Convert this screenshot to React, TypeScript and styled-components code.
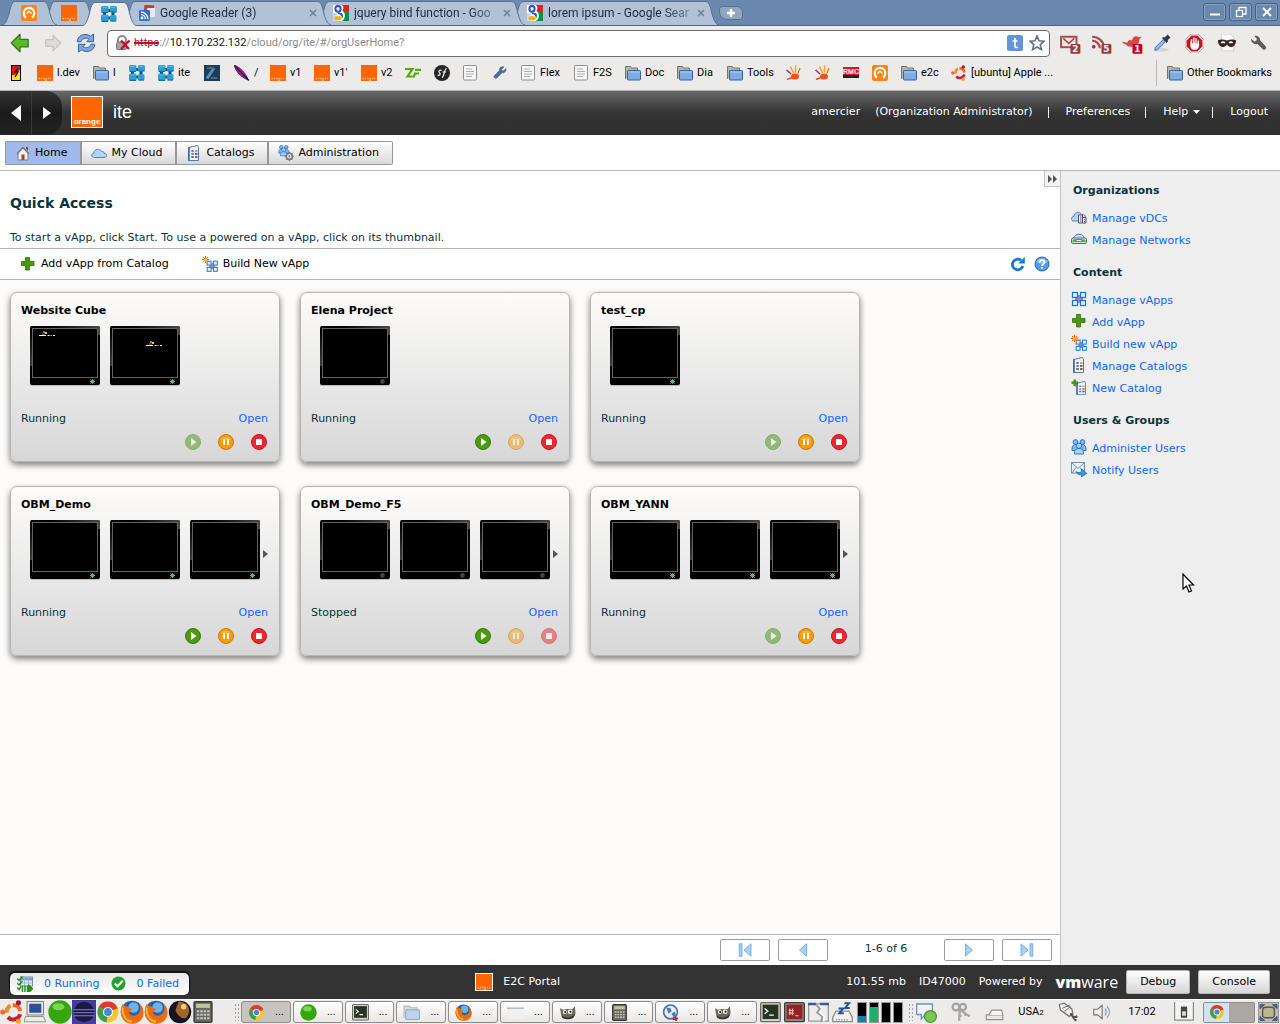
import React from 'react';
import styled, { createGlobalStyle, css } from 'styled-components';

const appFont = '"DejaVu Sans", Verdana, sans-serif';
const chromeFont = 'Roboto, "Open Sans", sans-serif';

const GlobalStyle = createGlobalStyle`
  * { box-sizing: border-box; }
  body { margin: 0; background: #fff; font: 11px/16px ${appFont}; color: #0b333c; }
  button, input { font: inherit; color: inherit; margin: 0; }
  a { color: #0a68ff; text-decoration: none; }
  h1, h2, h3 { margin: 0; font-weight: bold; }
  svg { display: block; flex: none; }
`;

/* ---------- icons ---------- */

type IconProps = { size?: number; dim?: boolean };

const Glyph = styled.svg.attrs({ viewBox: '0 0 16 16', 'aria-hidden': true })<{ $size: number; $dim?: boolean }>`
  width: ${p => p.$size}px;
  height: ${p => p.$size}px;
  opacity: ${p => (p.$dim ? 0.5 : 1)};
`;

const icon = (body: React.ReactNode) =>
  function Icon({ size = 16, dim }: IconProps) {
    return <Glyph $size={size} $dim={dim}>{body}</Glyph>;
  };

const SwirlIcon = icon(<>
  <rect width="16" height="16" rx="2" fill="#ff8412" />
  <path d="M5 12.500a5.300 5.300 0 1 1 6 0" fill="none" stroke="#fff" strokeWidth="2.200" />
  <path d="M5.500 8.500L8 6l2.500 2.500" fill="none" stroke="#fff" strokeWidth="1.200" />
</>);
const OrangeIcon = icon(<>
  <rect width="16" height="16" fill="#ff6600" />
  <path d="M1.500 13.500h1.600m.8 0h1.400m.8 0h1.600m.8 0h1.400m.8 0h1.400m.8 0h1.200M8 15.200h2" stroke="#ffb27f" strokeWidth="1.600" />
</>);
const BlocksIcon = icon(<>
  <path d="M6 4.500h5M3.500 6v4M6 12h4M12 5v5" stroke="#184f70" strokeWidth="3" />
  <g fill="#2a9fd6">
    <rect x="0" y="0" width="7.500" height="7" rx="1.500" /><rect x="9" y="0" width="7" height="6.500" rx="1.500" />
    <rect x="0" y="8.500" width="7.500" height="7.500" rx="1.500" /><rect x="9" y="9" width="6.500" height="6.500" rx="1.500" />
  </g>
  <path d="M1 6.500h6M9.500 6h6M1 15.300h6M9.500 15h5.500" stroke="#156c9c" strokeWidth="1.200" />
  <path d="M1.500 1.500h4.500M10.300 1.500h4M1.500 10h4.500" stroke="#58bbe8" strokeWidth="1" />
</>);
const ReaderIcon = icon(<>
  <rect x="5" y="0" width="10" height="10" rx="1" fill="#c8402f" transform="rotate(4 9 5)" />
  <rect x="8" y="3" width="8" height="9" rx="1" fill="#e8ebf4" />
  <rect x="0" y="5" width="11" height="11" rx="1.400" fill="#2d6fd4" />
  <circle cx="3" cy="13" r="1.400" fill="#fff" />
  <path d="M2 9.600a4.600 4.600 0 0 1 4.400 4.600M2 7a7.200 7.200 0 0 1 7 7.200" fill="none" stroke="#fff" strokeWidth="1.400" />
</>);
const GoogleIcon = icon(<>
  <rect width="16" height="16" fill="#fff" />
  <path d="M9 0h7v6H9z" fill="#e8201c" /><path d="M8 6h8v10H9z" fill="#0d9044" />
  <path d="M0 8h4l-1 8H0z" fill="#c9d8f5" />
  <path d="M9 1c1 2 0 4-1 5.500 3 1 3 3 3 4.500 0 2-1 3-2 4" fill="none" stroke="#fff" strokeWidth="2" />
  <ellipse cx="5" cy="3.800" rx="2.600" ry="2.900" fill="#fff" stroke="#2457c5" strokeWidth="2" />
  <path d="M5 8.200c3 .4 4 1.300 3.800 3" fill="none" stroke="#2457c5" strokeWidth="1.800" />
  <ellipse cx="5" cy="13.200" rx="3.600" ry="2.200" fill="#f7b50c" />
</>);
const BackIcon = icon(<path d="M1 8l7-7v4h6.500v6H8v4z" fill="#5db82c" stroke="#2c7a12" strokeWidth="1" strokeLinejoin="round" />);
const ForwardIcon = icon(<path d="M15 8L8 1v4H1.500v6H8v4z" fill="#dcdcda" stroke="#c2c2c0" strokeWidth="1" strokeLinejoin="round" />);
const ReloadIcon = icon(<g fill="#7fa9de" stroke="#3162a0" strokeWidth=".8" strokeLinejoin="round">
  <path d="M1 7C1 2 7-.5 11.500 2.500L14 .8V7H8.500l2-2C7.500 3.300 5 4.500 4 7z" />
  <path d="M15 9c0 5-6 7.500-10.500 4.500L2 15.200V9h5.500l-2 2c3 1.700 5.500.5 6.500-2z" />
</g>);
const LockIcon = icon(<>
  <path d="M3 8V5a4 4 0 0 1 8 0v3" fill="none" stroke="#8c8c8c" strokeWidth="2" />
  <rect x="1.500" y="7" width="10" height="7.500" rx="1.500" fill="#a5a5a3" stroke="#777" />
  <path d="M6 5.500l8 8.500M14.500 5.500L6 14" stroke="#c9102a" strokeWidth="2.400" />
</>);
const TumblrIcon = icon(<>
  <rect width="16" height="16" rx="2" fill="#6594dd" />
  <path d="M8 3v8c0 1.500 1.300 1.800 2.800 1.200M5.500 6h5" fill="none" stroke="#fff" strokeWidth="1.700" />
</>);
const StarIcon = icon(<path d="M8 1l2 4.800 5 .4-3.800 3.400 1.200 5L8 12l-4.400 2.600 1.200-5L1 6.200l5-.4z" fill="#fff" stroke="#5f6f8d" strokeWidth="1.600" />);
const badge = (n: string, c: string) => <>
  <rect x="9.500" y="8" width="9" height="9" rx="1" fill={c} />
  <text x="14" y="15.500" fontSize="8" fontWeight="bold" fill="#fff" textAnchor="middle" fontFamily="DejaVu Sans">{n}</text>
</>;
const BigGlyph = styled.svg.attrs({ viewBox: '0 0 20 18', 'aria-hidden': true })`width: 22px; height: 20px; margin-top: 4px;`;
const MailBadge = () => <BigGlyph><rect x="1" y="1.500" width="14" height="9.500" fill="#f4e9e9" stroke="#a94a4c" strokeWidth="1.800" /><path d="M3 3l5 4.500L13 3" fill="none" stroke="#a94a4c" strokeWidth="1.600" />{badge('2', '#9b3b3f')}</BigGlyph>;
const FeedBadge = () => <BigGlyph><circle cx="2.500" cy="10.500" r="1.700" fill="#9c3a3a" /><path d="M1 5a7 7 0 0 1 7 7M1 1.500A11 11 0 0 1 12 11" fill="none" stroke="#a94a4c" strokeWidth="2" />{badge('5', '#9b3b3f')}</BigGlyph>;
const BirdBadge = () => <BigGlyph><path d="M0 6l5 1C5 4 8 4 9 5c1-4 4-5 6-3l3-.5-2 2c0 5-4 7-8 7-3 0-4-1-4-2C2 8.500 1 7.500 0 6z" fill="#d5464a" />{badge('1', '#c4001d')}</BigGlyph>;
const DropperIcon = icon(<><ellipse cx="8" cy="14" rx="6" ry="1.500" fill="#d3d3d0" /><path d="M1.500 14.500L2 12l7-7 2 2-7 7z" fill="#8fb9ee" stroke="#3a6cae" strokeWidth=".8" /><path d="M8 3.500l1.500-1 1 .5L13 .5l2.500 2.500L13 5.500l.5 1-1.500 1.500z" fill="#2b3a4c" /></>);
const AdblockIcon = icon(<><path d="M5 0h6l5 5v6l-5 5H5l-5-5V5z" fill="#fff" stroke="#888" strokeWidth=".6" /><path d="M5.500 1.300h5l4.200 4.200v5l-4.200 4.200h-5l-4.200-4.200v-5z" fill="#d60e1c" /><path d="M4.500 7v3c0 2 1.500 3.300 3.500 3.300s3.500-1 3.800-3.300V5.500h-1.200V8h-.7V3.500H8.700V7.500H8V3H6.800v5h-.7V4.500H4.900z" fill="#fff" /></>);
const MaskIcon = icon(<><path d="M3 0h8l3 3v12H3z" fill="#fafafa" stroke="#c9c9c9" strokeWidth=".7" /><path d="M0 5.500c3-1 5-.5 8 .2 3-.7 5-1.200 8-.2 0 4-2 6-4.500 6-1.500 0-2.500-1-3.500-2-1 1-2 2-3.500 2C2 11.500 0 9.500 0 5.500z" fill="#38201f" /><path d="M2.800 8c1-1 2.500-1 3.400 0M9.800 8c1-1 2.500-1 3.400 0" stroke="#fff" strokeWidth="1.400" fill="none" /></>);
const WrenchIcon = icon(<path d="M1 3.500L4 6l2-.5.500-2L4 1c2.500-1 5.500.5 5.500 4L15 11c1 1.500-1 3.800-2.700 2.700L7 8.500C4 9.500.8 7 1 3.500z" fill="#5d5d5b" />);
const BlueWrenchIcon = icon(<path d="M14 3.500L11.500 6l-1.500-.3-.3-1.500L12 2C9.500 1 7 3 7.500 5.500l-5 5c-1.400 1.700.6 3.700 2.400 2.500l5-5.200c2.600.5 4.600-1.800 4.100-4.300z" fill="#4d6b9e" stroke="#2f4b7b" strokeWidth=".5" />);
const LampIcon = icon(<><rect x="3.500" y=".5" width="9" height="15" fill="#f5e42a" stroke="#000" /><path d="M4 1h8v4L7 10H4z" fill="#e21717" /><path d="M10 3L7 7h3l-3 5" stroke="#000" strokeWidth="1.200" fill="none" /></>);
const FolderIcon = icon(<><path d="M.5 14V1.500h5l1 1.500h6v2" fill="#b4b4b0" stroke="#74746f" /><rect x="2.500" y="5.500" width="13" height="9.500" rx=".8" fill="#7facdf" stroke="#31649f" /><path d="M3.500 7h11" stroke="#b3d0f1" /></>);
const ZendIcon = icon(<><rect width="16" height="16" fill="#1c3e58" /><path d="M3 13.500L10 3" stroke="#5b90b5" strokeWidth="3" /><path d="M3 3h7M7 13h6" fill="none" stroke="#3d6d8f" strokeWidth="1.800" /></>);
const FeatherIcon = icon(<><path d="M0 0c5 2 9 5 13 12l1 3-4-2C5 10 2 6 0 0z" fill="#d3107e" stroke="#1b1b6c" strokeWidth=".8" /><path d="M1 1l14 14.500" stroke="#301050" strokeWidth="1.300" /></>);
const ZfIcon = icon(<path d="M0 4h7.500L2.500 11.500H7.500M8.500 12.500l1.500-4h4M10 4.800h6" fill="none" stroke="#59a60f" strokeWidth="2.200" />);
const SfIcon = icon(<><circle cx="8" cy="8" r="8" fill="#262626" /><path d="M7.500 5.500c-2-1-3.500.5-2 2.200 1.500 1.500 0 3.300-2 2.300M8 12.500c2 0 2-8 4.500-9M8.500 7h3.500" fill="none" stroke="#fff" strokeWidth="1.200" /></>);
const PageIcon = icon(<><rect x="1.500" y=".5" width="13" height="14.500" rx=".8" fill="#f8f8f8" stroke="#8f8f8f" /><path d="M4 4h6M4 6.500h8M4 9h8M4 11.500h6" stroke="#aeaeae" /></>);
const HandIcon = icon(<><ellipse cx="10" cy="11.500" rx="4" ry="3" fill="#ee5413" /><path d="M2 14.500l5-2" stroke="#ee5413" strokeWidth="1.800" /><path d="M6 9L1.500 5" stroke="#b0289a" strokeWidth="1.600" /><path d="M8.500 8L5.500 1.500" stroke="#f5a416" strokeWidth="1.500" /><path d="M10.500 7.500V.5" stroke="#f5a416" strokeWidth="1.500" /><path d="M12.800 8.500l2.200-5.500" stroke="#ee7c13" strokeWidth="1.400" /></>);
const RmcIcon = icon(<><rect y="2" width="16" height="8" fill="#e1131a" /><rect y="10" width="16" height="3" fill="#222" /><text x="8" y="8.500" fontSize="7" fontWeight="bold" fill="#fff" textAnchor="middle" fontFamily="Liberation Sans">RMC</text></>);
const UbuntuIcon = icon(<>
  <path d="M4.500 8.500a5 5 0 0 1 2.500-4.800" fill="none" stroke="#f08a24" strokeWidth="2.600" />
  <path d="M8.500 3.400a5 5 0 0 1 5 4" fill="none" stroke="#ef6b1f" strokeWidth="2.600" />
  <path d="M13.500 9.500a5 5 0 0 1-8.300 2" fill="none" stroke="#c8202d" strokeWidth="2.600" />
  <circle cx="1.800" cy="8" r="1.700" fill="#f0692a" /><circle cx="12.300" cy="1.900" r="1.700" fill="#b0142a" /><circle cx="12.300" cy="14.200" r="1.700" fill="#f9a12c" />
</>);
const HomeIcon = icon(<><path d="M3 8v7h10V8L8 3z" fill="#f3efe9" stroke="#7a7f88" /><path d="M2 9l6-6.500L14 9" fill="none" stroke="#6b747e" strokeWidth="1.200" /><path d="M11 2h2v4l-2-2z" fill="#a3413c" /><rect x="6.500" y="9.500" width="3" height="5.500" fill="#a2432e" /></>);
const CloudIcon = icon(<path d="M3.500 12.500C0 12.500 0 8.500 3 8c0-4 6-5 7.500-1.500C12.500 6.200 13 7 13 8.300c3.500 0 3.500 4.200 0 4.200z" fill="#b3d3f3" stroke="#5383b9" />);
const catalogBody = <><path d="M2.500 2.500l9-2 1 2v13h-10z" fill="#eef4fb" stroke="#4e7cb2" /><path d="M3 2v13.500" stroke="#3f69a2" strokeWidth="1.600" /><path d="M5.300 6h2.500M5.300 9h2.500" stroke="#8a6de0" strokeWidth="1.800" /><path d="M9 6h2.500" stroke="#f4843d" strokeWidth="1.800" /><path d="M9 9h2.500M5.300 12h2.500" stroke="#3c8a59" strokeWidth="1.800" /><path d="M9 12h2.500" stroke="#a33c3c" strokeWidth="1.800" /></>;
const CatalogIcon = icon(catalogBody);
const plusBody = <path d="M5.500 1.500h4v4h4.500v4H9.500V14h-4V9.500H1.500v-4h4z" fill="#48990f" stroke="#2f7006" strokeWidth=".8" />;
const PlusIcon = icon(plusBody);
const NewCatalogIcon = icon(<><g transform="translate(3.500 2) scale(.88)">{catalogBody}</g><g transform="scale(.5)">{plusBody}</g></>);
const usersBody = <g fill="#83b9f2" stroke="#1b6bc2" strokeWidth=".9"><circle cx="4.500" cy="3" r="2.400" /><circle cx="11.500" cy="3" r="2.400" /><path d="M1 11.500c0-4 1-6 3.500-6h7c2.500 0 3.500 2 3.500 6z" /><circle cx="8" cy="6.700" r="2.700" fill="#a9d0fa" /><path d="M3.500 15c-.5-4 1.500-5.500 4.500-5.500s5 1.500 4.500 5.500z" fill="#a9d0fa" /></g>;
const UsersIcon = icon(usersBody);
const gear = <><circle cx="11.300" cy="11.300" r="3" fill="none" stroke="#777b82" strokeWidth="1.800" /><path d="M11.300 6.700v9.200M6.700 11.300h9.200M8 8l6.500 6.500M14.500 8L8 14.500" stroke="#777b82" strokeWidth="1.300" /><circle cx="11.300" cy="11.300" r="2.200" fill="#e4e6e8" /><circle cx="11.300" cy="11.300" r="1" fill="#777b82" /></>;
const AdminIcon = icon(<><g transform="scale(.72)">{usersBody}</g>{gear}</>);
const vappBody = <><rect x="5" y="5" width="6" height="6" fill="#8f84e2" /><path d="M8 4v8M4 8h8" stroke="#8f84e2" strokeWidth="2" /><g fill="#dcf0fd" stroke="#1a73c8" strokeWidth="1.200"><rect x="1.500" y="1.500" width="5" height="5" /><rect x="9.500" y="1.500" width="5" height="5" /><rect x="1.500" y="9.500" width="5" height="5" /><rect x="9.500" y="9.500" width="5" height="5" /></g></>;
const VappIcon = icon(vappBody);
const BuildIcon = icon(<><g transform="translate(4 4) scale(.78)">{vappBody}</g><path d="M3.500 0v7M0 3.500h7M1 1l5 5M6 1L1 6" stroke="#f25a12" strokeWidth="1" /><circle cx="3.500" cy="3.500" r="1.600" fill="#ffc51f" /></>);
const VdcIcon = icon(<><path d="M3 12C-.5 12-.5 7.500 3 7.500 3 3 9 2 10.500 5.500c3-.5 4 1 4 3V12z" fill="#b8d6f2" stroke="#5383b9" /><path d="M7.500 6h4v8h-4zM11.500 8.500H15V14h-3.500z" fill="#f6f4fb" stroke="#52496f" /><path d="M9 8h1.500M9 10h1.500M9 12h1.500M13 10.500h1M13 12.500h1" stroke="#52496f" /></>);
const NetIcon = icon(<><path d="M2 8.500c1-7 11-7 12 0" fill="#c6dcef" stroke="#5383b9" /><rect x=".5" y="7" width="15" height="5.500" rx="1.500" fill="#e4edf5" stroke="#3b5b78" strokeWidth=".9" /><path d="M1.500 9.700h13" stroke="#3fc01f" strokeWidth="2.600" /><rect x="5" y="8.700" width="6" height="2" fill="#f7f7f7" stroke="#565" strokeWidth=".8" /></>);
const NotifyIcon = icon(<><rect x=".5" y="1.500" width="13" height="10.500" fill="#eef4fb" stroke="#6b8db6" /><path d="M1 2l6 5.500L13 2M1 12l4-5.500M13 12L9 6.500" fill="none" stroke="#6b8db6" /><path d="M5 10.500c2 1.500 4 1.500 5.500 0V8l5.300 4.300L10.500 16v-2.300C8 14 6 13 5 10.500z" fill="#2f9af0" stroke="#1263ac" strokeWidth=".7" /></>);
const RefreshIcon = icon(<><path d="M12.800 10A5.300 5.300 0 1 1 11 4.300" fill="none" stroke="#1878d8" strokeWidth="2.800" /><path d="M14.800 1v6.500H8.300z" fill="#1878d8" /></>);
const HelpIcon = icon(<><circle cx="8" cy="8" r="7" fill="#4f9bec" stroke="#1f66b4" /><path d="M2.500 6a6 6 0 0 1 11 0c-3 2-8 2-11 0z" fill="#8ec3f8" /><path d="M5.700 6.400c0-3 4.800-3 4.800 0C10.500 8 8 8 8 10" fill="none" stroke="#fff" strokeWidth="1.600" /><circle cx="8" cy="12" r="1" fill="#fff" /></>);
const PlayIcon = icon(<><circle cx="8" cy="8" r="7.500" fill="#4b9a10" stroke="#387c08" /><path d="M6 4l5.500 4L6 12z" fill="#fff" /></>);
const PauseIcon = icon(<><circle cx="8" cy="8" r="7.500" fill="#fd9a06" stroke="#c9790e" /><path d="M3 6a5.500 5.500 0 0 1 10 0z" fill="#ffb52e" /><path d="M6 5v6M10 5v6" stroke="#fff" strokeWidth="2" /></>);
const StopIcon = icon(<><circle cx="8" cy="8" r="7.500" fill="#ee2630" stroke="#bc1a24" /><rect x="5" y="5" width="6" height="6" fill="#fff" /></>);
const JobsIcon = icon(<><rect x="3.500" y="1" width="12" height="9" fill="#eef4fb" stroke="#6b8db6" /><path d="M3.500 3h12" stroke="#7c9fc9" strokeWidth="3" /><path d="M7.500 1v9M11.500 1v9M3.500 7h12" stroke="#9ab4d3" /><path d="M0 2.500l2 2 3.500-4M0 7l2 2 3.500-4M0 11.500l2 2 2-3" fill="none" stroke="#2c8c1c" strokeWidth="1.500" /><path d="M5.500 9.500V16M8 9.500V16M10.500 9.500V16M12 9.500l3.500 3.200L12 16z" stroke="#2c8c1c" strokeWidth="1.500" fill="#2c8c1c" /></>);
const CheckIcon = icon(<><circle cx="8" cy="8" r="7.500" fill="#23a030" /><path d="M4 8l3 3 5.500-6" fill="none" stroke="#fff" strokeWidth="2.200" /></>);

/* desktop panel icons */
const ComputerIcon = icon(<><rect x="2" y="1" width="11" height="9" fill="#e7e5df" stroke="#8a8984" strokeWidth=".7" /><rect x="3.500" y="2.500" width="8" height="6" fill="#2a4f9b" /><path d="M1 11h12l1.500 3.500H0z" fill="#eceae5" stroke="#8a8984" strokeWidth=".6" /></>);
const GreenBallIcon = icon(<><circle cx="8" cy="8" r="7.800" fill="#34a70f" /><ellipse cx="7" cy="4.500" rx="4" ry="2.400" fill="#7fd655" /></>);
const EclipseIcon = icon(<><rect width="16" height="16" fill="#473b9c" /><circle cx="8" cy="8" r="6.800" fill="#1d1746" /><path d="M1 6.500h14M1 8.500h14M1 10.500h14" stroke="#8484c8" strokeWidth=".7" /></>);
const ChromeIcon = icon(<><circle cx="8" cy="8" r="7" fill="#f5c720" /><path d="M8 8L1.900 4.500A7 7 0 0 1 14.500 5.500z" fill="#dc3c2c" /><path d="M8 8l-1 7A7 7 0 0 1 1.900 4.500z" fill="#3ba14b" /><circle cx="8" cy="8" r="3.400" fill="#fff" /><circle cx="8" cy="8" r="2.600" fill="#4787d6" /></>);
const FirefoxIcon = icon(<><circle cx="8" cy="8" r="7.500" fill="#2461a9" /><circle cx="9" cy="5" r="3.500" fill="#6cb4e6" /><path d="M1.500 3L5 4.500 8 6 6 8.500c1 2.500 5 3 7-.5 1-2 .5-4-.5-6 6 6 3 13.800-4.500 13.800C1.500 15.800-1 9 1.500 3z" fill="#ea6d14" /><path d="M2 5c-1 5 2 9 6 9.500" fill="none" stroke="#f8b32e" strokeWidth="1.300" /></>);
const PlanetIcon = icon(<><circle cx="8" cy="8" r="7.500" fill="#191223" /><path d="M7 1c7 0 9 7 5 11-3 1-6-2-7-5z" fill="#a0662c" /><circle cx="10.500" cy="4.500" r="1.800" fill="#f3cf7c" /></>);
const CalcIcon = icon(<><rect x="1.500" y=".5" width="13" height="15" rx="1" fill="#686862" stroke="#373733" /><rect x="3" y="2" width="10" height="3" fill="#bcc6a0" /><path d="M3.500 7.500h9.500M3.500 10h9.500M3.500 12.500h9.500" stroke="#c5c5bd" strokeWidth="1.400" strokeDasharray="1.800 .7" /></>);
const TermIcon = icon(<><rect x=".5" y=".5" width="15" height="14.500" rx="1" fill="#d4d4cc" stroke="#6d6d67" /><rect x="2" y="2" width="12" height="11" fill="#283322" /><path d="M3.500 5l2.500 2-2.500 2M7 10h3.500" stroke="#fff" fill="none" /></>);
const RootTermIcon = icon(<><rect x=".5" y=".5" width="15" height="14.500" rx="1" fill="#8b8782" stroke="#403d3a" /><rect x="2" y="2" width="12" height="11" fill="#952125" /><path d="M4.500 5v5M6.500 5v5M3.500 6.500h4M3.500 8.500h4M8.500 10.500H11" stroke="#e4b9b9" fill="none" strokeWidth=".9" /></>);
const PaleFolderIcon = icon(<><path d="M1 13V2h5l1 1.500h6V6" fill="#d9d9d5" stroke="#b8b8b4" /><rect x="2.500" y="5.500" width="13" height="9" rx="1" fill="#bdd3ec" stroke="#93aeca" /></>);
const WindowIcon = icon(<><rect x="0" y="3" width="16" height="11" fill="#f0f0f0" /><path d="M0 4h16" stroke="#b4bcc6" strokeWidth="1.400" /></>);
const GimpIcon = icon(<><path d="M1 4l3 1.500c2-1 6-1 8.500-.5L15 2l.5 6c0 4-3 6-6.500 6s-6-1.500-7-4z" fill="#6b665a" /><path d="M2 10.500c4 3 9 3 13-1l-1 3c-3 2.500-8 2.500-11 .5z" fill="#393631" /><circle cx="5.500" cy="7.500" r="1.900" fill="#fff" /><circle cx="10.500" cy="7.300" r="2.200" fill="#fff" /><circle cx="5.800" cy="7.500" r=".9" /><circle cx="10.800" cy="7.300" r="1" /></>);
const GlobeIcon = icon(<><circle cx="8" cy="7.500" r="6.500" fill="#e5ecf6" stroke="#496fa8" strokeWidth="1.500" /><path d="M4 3l4 1 1 3-3 2zM9 9l3-2 1 3-2 3zM10 2l2 2" fill="#5278b3" /><path d="M10 14.500l5-1M12.500 12l1 4" stroke="#bd2832" strokeWidth="1.600" /></>);
const TornIcon = icon(<><path d="M.5 1.500h15v13H.500z" fill="#ececec" stroke="#999" /><path d="M0 1.500h6M9 1.500h7" stroke="#345d9c" strokeWidth="1.800" /><path d="M6 2l3 3-2 3 4 3-1 4" stroke="#999" strokeWidth="1.400" fill="none" /><path d="M8 2l3 3-2 3 3.500 3-.5 4" stroke="#fff" strokeWidth="1.200" fill="none" /></>);
const DriveIcon = icon(<><path d="M3 7h10l2.500 5v3H.500v-3z" fill="#f0f0ee" stroke="#8d8d89" /><path d="M3 13.500h10" stroke="#999" strokeDasharray="1 1" /><path d="M5 5h3.500L5.500 8.500H9M9.500 1h3.500l-3 3.500h3.500" stroke="#23529a" strokeWidth="1.500" fill="none" /></>);
const ChatIcon = icon(<><path d="M.5 1.500h12v8H7L4 13V9.500H.500z" fill="#eef4fb" stroke="#6d93c4" /><circle cx="11" cy="11" r="4.500" fill="#7cc455" stroke="#4a9528" /></>);
const KeysIcon = icon(<g fill="none" stroke="#a3a3a0" strokeWidth="1.800"><circle cx="4" cy="4" r="2.700" /><circle cx="9.500" cy="4" r="2.500" /><path d="M6 5.500l9 6M7 6l-.5 9M8.500 11l-2 .2M12 9l-1 2" /></g>);
const DiskIcon = icon(<><path d="M1 10h14v4H1z" fill="#e8e8e6" stroke="#8f8f8c" strokeWidth=".9" /><path d="M3 10l3-4h8l1 4" fill="#f5f5f4" stroke="#8f8f8c" strokeWidth=".9" /></>);
const PlugIcon = icon(<><path d="M1 2l4-1 6 4.500 1 4-3 2-7-5z" fill="#eee" stroke="#75756f" /><path d="M3.500 5l6-2.500M5 7.500l5.500-4" stroke="#75756f" strokeWidth=".8" /><path d="M10 9l2.500 3.500 3-1M12 12l2.500 3" stroke="#4d4d49" strokeWidth="1.700" fill="none" /></>);
const SpeakerIcon = icon(<><path d="M1.500 5.500H5l4-3.500v12L5 10.500H1.500z" fill="#f0f0ee" stroke="#73736f" /><path d="M11.500 5c1.500 2 1.500 4 0 6M13.500 3c2.500 3 2.500 7 0 10" fill="none" stroke="#8292a8" /></>);
const SwitchIcon = icon(<><path d="M.5 0v14.500h15V0" fill="#f4f4f2" stroke="#8d8d89" /><rect x="5.500" y="3.500" width="5" height="9" rx=".5" fill="#444" /><rect x="6.500" y="7.500" width="3" height="3.500" fill="#ddd" /></>);
const TrashIcon = icon(<><rect width="16" height="16" rx="1" fill="#bdbab7" stroke="#85827f" /><rect x="3.500" y="4" width="9" height="8" rx="2" fill="#b8b690" stroke="#56564a" /><path d="M1.500 5V2H5zM11 2h3.500v3zM1.500 11v3H5zM11 14h3.500v-3z" fill="#4d6892" stroke="#33496b" strokeWidth=".6" /></>);

/* ---------- browser window ---------- */

const Page = styled.div`
  position: relative;
  display: flex;
  flex-direction: column;
  min-height: 100vh;
`;

const TabStrip = styled.div`
  display: flex;
  align-items: flex-end;
  height: 26px;
  padding: 0 2px;
  background: #6b89ae;
  border-bottom: 1px solid #4d6480;
  font: 12px/16px ${chromeFont};
  color: #1d2a3a;
`;

const TabBox = styled.div<{ $w: number; $z: number; $active?: boolean }>`
  position: relative;
  z-index: ${p => p.$z};
  display: flex;
  align-items: center;
  gap: 5px;
  flex: 0 1 ${p => p.$w}px;
  min-width: 0;
  height: 26px;
  margin-right: -15px;
  padding: 2px 14px 0 ${p => (p.$w > 100 ? 17 : 19)}px;
  ${p => p.$active && css`margin-bottom: -1px;`}
`;

const TabShape = styled.svg`
  position: absolute;
  z-index: -1;
  inset: 0;
  width: 100%;
  height: 100%;
`;

const TabTitle = styled.span`
  flex: 1;
  white-space: nowrap;
  mask-image: linear-gradient(90deg, #000 80%, rgba(0, 0, 0, 0.3));
`;

const TabClose = styled.button`
  display: grid;
  place-items: center;
  width: 8px;
  height: 16px;
  padding: 0;
  border: 0;
  background: none;
`;

const NewTab = styled.button`
  display: grid;
  place-items: center;
  align-self: center;
  width: 24px;
  height: 14px;
  margin-left: 15px;
  padding: 0;
  border: 1px solid #56718f;
  border-radius: 3px 6px 3px 8px;
  background: #8fa6c3;
`;

const WindowButtons = styled.div`
  display: flex;
  align-self: center;
  gap: 3px;
  margin: 0 0 2px auto;
`;

const WindowButton = styled.button`
  display: grid;
  place-items: center;
  width: 23px;
  height: 18px;
  padding: 0;
  border: 1px solid #48617f;
  border-radius: 3px;
  background: #6b89ae;
  box-shadow: inset 0 0 0 1px #8aa2c0;
`;

function Tab({ w, z, active, title, children }: { w: number; z: number; active?: boolean; title?: string; children: React.ReactNode }) {
  return (
    <TabBox $w={w} $z={z} $active={active}>
      <TabShape viewBox={`0 0 ${w} 26`} preserveAspectRatio="none" aria-hidden>
        <path
          d={`M0 26C4 25 5 21 7 15 9 6 10 2.500 14 2.500H${w - 14}C${w - 10} 2.500 ${w - 9} 6 ${w - 7} 15 ${w - 5} 21 ${w - 4} 25 ${w} 26`}
          fill={active ? '#edebea' : '#b1c1d6'} stroke="#5b728f"
        />
      </TabShape>
      {children}
      {title && <TabTitle>{title}</TabTitle>}
      {title && <TabClose aria-label="Close tab"><svg width="8" height="8" viewBox="0 0 8 8"><path d="M1 1l6 6M7 1L1 7" stroke="#6e7f95" strokeWidth="1.500" /></svg></TabClose>}
    </TabBox>
  );
}

const Toolbar = styled.div`
  display: flex;
  align-items: center;
  height: 34px;
  padding: 0 13px 0 10px;
  background: #edebea;
  font: 11px/16px ${chromeFont};
`;

const NavButtons = styled.div`
  display: flex;
  gap: 14px;
  margin-right: 11px;
`;

const PlainButton = styled.button`
  display: flex;
  align-items: center;
  gap: 5px;
  padding: 0;
  border: 0;
  background: none;
`;

const AddressBar = styled.label`
  display: flex;
  flex: 1;
  align-items: center;
  height: 27px;
  padding: 0 4px 0 7px;
  border: 1px solid #6e6c6a;
  border-radius: 4px;
  background: #fff;
  color: #8a8a8a;
`;

const Scheme = styled.del`
  margin-left: 3px;
  color: #b3122b;
  text-decoration: line-through 2px;
`;

const Host = styled.span`color: #111;`;

const UrlInput = styled.input`
  flex: 1;
  min-width: 0;
  padding: 0;
  border: 0;
  outline: 0;
  background: none;
`;

const AddressTools = styled.span`
  display: flex;
  gap: 6px;
`;

const Extensions = styled.div`
  display: flex;
  align-items: center;
  gap: 9px;
  margin-left: 10px;
`;

const ToolIcons = styled.div`
  display: flex;
  align-items: center;
  gap: 14px;
`;

const BookmarkBar = styled.nav`
  display: flex;
  align-items: center;
  height: 31px;
  padding: 0 8px 4px;
  border-bottom: 1px solid #b5b3b1;
  background: #edebea;
  font: 11px/16px ${chromeFont};
`;

const Bookmark = styled.a<{ $w: number }>`
  display: flex;
  align-items: center;
  gap: 4px;
  flex: 0 1 ${p => p.$w}px;
  height: 26px;
  color: #000;
  white-space: nowrap;
`;

const OtherBookmarks = styled(Bookmark)`
  margin-left: auto;
  padding-left: 10px;
  border-left: 1px solid #b9b7b5;
`;

const bookmarks: [React.ComponentType<IconProps>, string, number][] = [
  [LampIcon, '', 29], [OrangeIcon, 'l.dev', 56], [FolderIcon, 'l', 36], [BlocksIcon, '', 29], [BlocksIcon, 'ite', 46],
  [ZendIcon, '', 30], [FeatherIcon, '/', 36], [OrangeIcon, 'v1', 44], [OrangeIcon, "v1'", 47], [OrangeIcon, 'v2', 44],
  [ZfIcon, '', 29], [SfIcon, '', 28], [PageIcon, '', 30], [BlueWrenchIcon, '', 28], [PageIcon, 'Flex', 53], [PageIcon, 'F2S', 52],
  [FolderIcon, 'Doc', 52], [FolderIcon, 'Dia', 50], [FolderIcon, 'Tools', 58], [HandIcon, '', 29], [HandIcon, '', 29],
  [RmcIcon, '', 29], [SwirlIcon, '', 29], [FolderIcon, 'e2c', 50], [UbuntuIcon, '[ubuntu] Apple ...', 120],
];

/* ---------- application header ---------- */

const Header = styled.header`
  display: flex;
  align-items: center;
  height: 44px;
  padding-right: 12px;
  background: linear-gradient(#696969, #333 50%, #303030);
  color: #fff;
`;

const History = styled.div`
  display: flex;
  height: 44px;
  overflow: hidden;
  border-radius: 0 16px 16px 0;
  background: linear-gradient(#333, #1a1a1a 50%, #242424);
`;

const HistoryButton = styled.button`
  display: grid;
  place-items: center;
  width: 31px;
  height: 44px;
  padding: 0;
  border: 0;
  background: none;
  & + & { border-left: 1px solid #3a3a3a; }
`;

const Logo = styled.div`
  display: flex;
  align-items: flex-end;
  justify-content: center;
  flex: none;
  width: 32px;
  height: 32px;
  margin: 0 10px 2px 9px;
  border: 1px solid #fff;
  background: #ff6600;
  color: #fff;
  font: bold 8px/10px "Liberation Sans", sans-serif;
`;

const OrgName = styled.h1`
  margin-bottom: 2px;
  font: 18px/24px "Liberation Sans", Arial, sans-serif;
`;

const UserMenu = styled.nav`
  display: flex;
  align-items: center;
  margin: 0 0 3px auto;
  a { color: #fff; }
`;

const Role = styled.span`margin-left: 15px;`;

const Divider = styled.span`
  width: 1px;
  height: 11px;
  margin: 2px 17px 0 15px;
  background: #fff;
`;

const HelpLink = styled.a`
  display: flex;
  align-items: center;
  gap: 5px;
  margin-right: -3px;
`;

const AppTabs = styled.nav`
  display: flex;
  align-items: flex-start;
  height: 36px;
  padding: 6px 5px;
  border-bottom: 1px solid #b7babb;
  background: #fff;
`;

const AppTab = styled.button<{ $active?: boolean }>`
  display: flex;
  align-items: center;
  gap: 4px;
  height: 24px;
  padding: 0 13px 1px 9px;
  border: 1px solid #979797;
  border-right-width: 2px;
  background: ${p => (p.$active ? '#a0baeb' : 'linear-gradient(#fff, #d8d8d8)')};
  color: #000;
  & + & { border-left-width: 0; }
  &:last-child { border-right-width: 1px; border-radius: 0 2px 2px 0; }
  &:first-child { border-radius: 2px 0 0 2px; }
`;

/* ---------- main area ---------- */

const Body = styled.div`
  display: flex;
  flex: 1;
`;

const Main = styled.main`
  display: flex;
  flex: 1;
  flex-direction: column;
  min-width: 0;
  background: #fdfcfa;
`;

const Intro = styled.section`
  display: flex;
  justify-content: space-between;
  align-items: flex-start;
  height: 78px;
  padding-left: 10px;
  border-bottom: 1px solid #b4b9bd;
  background: #fff;
`;

const PageTitle = styled.h2`
  margin: 24px 0 19px;
  font-size: 14px;
  line-height: 16px;
`;

const Hint = styled.p`margin: 0;`;

const Collapse = styled.button`
  display: grid;
  place-items: center;
  width: 16px;
  height: 16px;
  padding: 0;
  border: solid #c4c4c4;
  border-width: 0 0 1px 1px;
  background: #f4f4f4;
`;

const Actions = styled.div`
  display: flex;
  align-items: center;
  gap: 33px;
  height: 31px;
  padding: 0 10px 0 20px;
  border-bottom: 1px solid #b4b9bd;
  background: #fff;
  color: #000;
`;

const ActionTools = styled.div`
  display: flex;
  gap: 8px;
  margin-left: auto;
`;

const Cards = styled.section`
  display: grid;
  flex: 1;
  grid-template-columns: repeat(auto-fill, 270px);
  align-content: start;
  gap: 24px 20px;
  padding: 12px 10px;
`;

const Card = styled.article`
  display: flex;
  flex-direction: column;
  height: 170px;
  padding: 10px 11px 10px 10px;
  border: 1px solid #b5b5b5;
  border-radius: 7px;
  background: linear-gradient(#fdfcfb, #d7d7d7);
  box-shadow: 0 3px 6px rgba(0, 0, 0, 0.5);
`;

const CardTitle = styled.h3`
  color: #000;
  font-size: 11px;
  line-height: 16px;
`;

const Screens = styled.div`
  display: flex;
  align-items: center;
  gap: 10px;
  margin: 7px 0 25px 9px;
`;

const More = styled.button`
  width: 5px;
  margin: 7px 0 0 -7px;
  padding: 0;
  border: 0;
  background: none;
`;

const StatusRow = styled.div`
  display: flex;
  justify-content: space-between;
`;

const Controls = styled.div`
  display: flex;
  justify-content: flex-end;
  gap: 17px;
  margin-top: 7px;
  padding-right: 1px;
`;

function Screen({ on, logo }: { on: boolean; logo?: [number, number] }) {
  return (
    <svg width="70" height="60" viewBox="0 0 70 60" role="img" aria-label="vApp console">
      <defs>
        <linearGradient id="gloss" x1="0" x2="1"><stop offset=".3" stopColor="#000" /><stop offset="1" stopColor="#484848" /></linearGradient>
        <linearGradient id="edge" x1="0" x2="0" y1="0" y2="1"><stop offset="0" stopColor="#000" /><stop offset="1" stopColor="#3c3c3c" /></linearGradient>
      </defs>
      <rect y="1" width="70" height="59" rx="2" fill="#9a9a9a" opacity=".6" />
      <rect width="70" height="59" rx="2" fill="#000" />
      <path d="M1 0h67q2 0 2 2v7h-3V2H1z" fill="url(#gloss)" />
      <path d="M0 4h2v36H0z" fill="url(#edge)" />
      <rect x="2.500" y="2.500" width="65" height="49" fill="#000" stroke="#636363" />
      {on
        ? <path d="M62.500 53v5M60 55.500h5M60.500 53.500l4 4M64.500 53.500l-4 4" stroke="#45d478" strokeWidth=".9" />
        : <circle cx="62.500" cy="55.500" r="2.400" fill="#444" />}
      {logo && (
        <g transform={`translate(${logo[0]} ${logo[1]})`}>
          <path d="M4 2h2" stroke="#e5532d" strokeWidth="2" /><path d="M3 4h3" stroke="#4b78e4" strokeWidth="1" />
          <path d="M6 3h2" stroke="#e8d23c" strokeWidth="2" />
          <path d="M0 5.500h7M8.500 5.500h2M11.500 5.500h1M14 5.500h2" stroke="#fff" />
        </g>
      )}
    </svg>
  );
}

type VApp = { name: string; status: string; screens: number; on: boolean; logos?: [number, number][]; play: boolean; pause: boolean; stop: boolean };

const vapps: VApp[] = [
  { name: 'Website Cube', status: 'Running', screens: 2, on: true, logos: [[9, 4], [36, 14]], play: false, pause: true, stop: true },
  { name: 'Elena Project', status: 'Running', screens: 1, on: false, play: true, pause: false, stop: true },
  { name: 'test_cp', status: 'Running', screens: 1, on: true, play: false, pause: true, stop: true },
  { name: 'OBM_Demo', status: 'Running', screens: 3, on: true, play: true, pause: true, stop: true },
  { name: 'OBM_Demo_F5', status: 'Stopped', screens: 3, on: false, play: true, pause: false, stop: false },
  { name: 'OBM_YANN', status: 'Running', screens: 3, on: true, play: false, pause: true, stop: true },
];

const Pager = styled.div`
  display: flex;
  align-items: center;
  justify-content: flex-end;
  gap: 8px;
  height: 31px;
  padding: 0 8px;
  border-top: 1px solid #b4b9bd;
  background: #fff;
`;

const PageButton = styled.button`
  display: grid;
  place-items: center;
  width: 50px;
  height: 22px;
  padding: 0;
  border: 1px solid #9b9b9b;
  border-radius: 2px;
  background: #fff;
`;

const PageCount = styled.span`
  width: 100px;
  margin-bottom: 3px;
  text-align: center;
`;

function PageArrow({ back, edge }: { back?: boolean; edge?: boolean }) {
  return (
    <svg width="14" height="14" viewBox="0 0 14 14" aria-hidden>
      <g transform={back ? 'rotate(180 7 7)' : undefined} fill="#a6d0f7" stroke="#62a5e2" strokeWidth=".8">
        <path d={edge ? 'M1 .8L8 7 1 13.200z' : 'M3.500.8L10.500 7l-7 6.200z'} />
        {edge && <rect x="10" y=".8" width="2.800" height="12.400" />}
      </g>
    </svg>
  );
}

/* ---------- sidebar ---------- */

const Sidebar = styled.aside`
  width: 220px;
  flex: none;
  padding: 12px 10px;
  border-left: 1px solid #c4c4c4;
  background: #eeeeee;
`;

const SideTitle = styled.h3`
  margin: 0 0 8px 2px;
  font-size: 11px;
  line-height: 16px;
`;

const SideList = styled.ul`
  margin: 0 0 14px;
  padding: 0;
  list-style: none;
`;

const SideLink = styled.a`
  display: flex;
  align-items: flex-start;
  gap: 5px;
  height: 22px;
  padding-top: 2px;
  line-height: 20px;
`;

const sections: [string, [React.ComponentType<IconProps>, string][]][] = [
  ['Organizations', [[VdcIcon, 'Manage vDCs'], [NetIcon, 'Manage Networks']]],
  ['Content', [[VappIcon, 'Manage vApps'], [PlusIcon, 'Add vApp'], [BuildIcon, 'Build new vApp'], [CatalogIcon, 'Manage Catalogs'], [NewCatalogIcon, 'New Catalog']]],
  ['Users & Groups', [[UsersIcon, 'Administer Users'], [NotifyIcon, 'Notify Users']]],
];

/* ---------- footer ---------- */

const Footer = styled.footer`
  display: flex;
  align-items: center;
  justify-content: space-between;
  height: 34px;
  padding: 0 10px;
  background: #333;
  color: #fff;
`;

const Jobs = styled.div`
  display: flex;
  align-items: center;
  gap: 11px;
  height: 22px;
  margin-top: 3px;
  padding: 0 10px 0 7px;
  border-radius: 5px;
  background: linear-gradient(#e9e9e9, #fff);
  box-shadow: 0 -1px 1px 1px #111;
`;

const Portal = styled.div`
  display: flex;
  align-items: center;
  gap: 10px;
`;

const PortalLogo = styled.span`border: 1px solid #fff;`;

const FooterInfo = styled.div`
  display: flex;
  align-items: center;
  gap: 13px;
`;

const VmwareMark = styled.span`
  margin-right: -5px;
  font: 16px/20px "Open Sans", sans-serif;
  b { font-weight: 800; }
`;

const FooterButtons = styled.div`
  display: flex;
  gap: 8px;
`;

const FooterButton = styled.button`
  height: 24px;
  padding: 0 13px;
  border: 1px solid #b5b5b5;
  border-radius: 2px;
  background: linear-gradient(#fff, #d6d6d6);
  color: #000;
`;

/* ---------- desktop panel ---------- */

const Panel = styled.div`
  display: flex;
  align-items: center;
  height: 25px;
  border-top: 1px solid #fff;
  background: #edebea;
  color: #000;
  font: 11px/16px ${chromeFont};
  overflow: hidden;
`;

const Launchers = styled.div`
  display: flex;
  width: 234px;
  flex: none;
`;

const Grip = styled.div`
  flex: none;
  width: 5px;
  height: 18px;
  background: radial-gradient(circle, #a5a3a1 1px, transparent 1px) 0 0 / 3px 4px;
`;

const Tasks = styled.div`
  display: flex;
  flex: 1;
  gap: 2px;
  min-width: 0;
  margin: 0 3px 0 2px;
`;

const Task = styled.button<{ $active?: boolean }>`
  display: flex;
  align-items: center;
  justify-content: space-between;
  flex: 1;
  min-width: 0;
  height: 22px;
  padding: 0 6px;
  border: 1px solid #8f8d8b;
  border-radius: 3px;
  background: ${p => (p.$active ? '#c6c3c0' : 'linear-gradient(#fff, #e9e7e5)')};
`;

const Tray = styled.div<{ $gap: number }>`
  display: flex;
  align-items: center;
  flex: none;
  gap: ${p => p.$gap}px;
`;

const MeterTray = styled(Tray)`margin: 0 5px 0 4px;`;
const StatusTray = styled(Tray)`margin: 0 9px 0 3px;`;
const LastTray = styled(Tray)`margin: 0 1px 0 3px;`;

const Meter = styled.span<{ $level: number; $color: string }>`
  width: 10px;
  height: 21px;
  border: 1px solid #9a9896;
  background: linear-gradient(0deg, ${p => p.$color} ${p => p.$level}%, #000 ${p => p.$level}%);
`;

const TrayText = styled.span<{ $w: number }>`
  width: ${p => p.$w}px;
  text-align: center;
  white-space: nowrap;
  sub { font-size: 8px; line-height: 8px; vertical-align: baseline; }
`;

const Workspaces = styled.div`
  display: flex;
  width: 52px;
  height: 21px;
  border: 1px solid #8f8d8b;
  border-radius: 2px;
  background: #aaa7a4;
`;

const ActiveSpace = styled.span`
  display: grid;
  place-items: center;
  width: 25px;
  background: #cfe2f8;
`;

const Pointer = styled.svg`
  position: absolute;
  left: 1182px;
  top: 573px;
`;

const tasks: React.ComponentType<IconProps>[] = [ChromeIcon, GreenBallIcon, TermIcon, PaleFolderIcon, FirefoxIcon, WindowIcon, GimpIcon, CalcIcon, GlobeIcon, GimpIcon];
const launchers: React.ComponentType<IconProps>[] = [UbuntuIcon, ComputerIcon, GreenBallIcon, EclipseIcon, ChromeIcon, FirefoxIcon, FirefoxIcon, PlanetIcon];

export default function App() {
  return (
    <Page>
      <GlobalStyle />
      <TabStrip>
        <Tab w={55} z={5}><SwirlIcon /></Tab>
        <Tab w={55} z={4}><OrangeIcon /></Tab>
        <Tab w={55} z={9} active><BlocksIcon /></Tab>
        <Tab w={209} z={3} title="Google Reader (3)"><ReaderIcon /></Tab>
        <Tab w={209} z={2} title="jquery bind function - Goo"><GoogleIcon /></Tab>
        <Tab w={209} z={1} title="lorem ipsum - Google Sear"><GoogleIcon /></Tab>
        <NewTab aria-label="New tab"><svg width="10" height="10" viewBox="0 0 10 10"><path d="M5 1v8M1 5h8" stroke="#fff" strokeWidth="2.400" /></svg></NewTab>
        <WindowButtons>
          <WindowButton aria-label="Minimize"><svg width="12" height="12"><path d="M1 8.500h10" stroke="#fff" strokeWidth="2" /></svg></WindowButton>
          <WindowButton aria-label="Restore"><svg width="12" height="12" fill="none" stroke="#fff" strokeWidth="1.300"><path d="M4 4V1.500h7V8H8" /><rect x="1.500" y="4.500" width="6" height="6" /></svg></WindowButton>
          <WindowButton aria-label="Close"><svg width="12" height="12"><path d="M2 2l8 8M10 2l-8 8" stroke="#fff" strokeWidth="1.800" /></svg></WindowButton>
        </WindowButtons>
      </TabStrip>

      <Toolbar>
        <NavButtons>
          <PlainButton aria-label="Back"><BackIcon size={20} /></PlainButton>
          <PlainButton aria-label="Forward"><ForwardIcon size={18} /></PlainButton>
          <PlainButton aria-label="Reload"><ReloadIcon size={20} /></PlainButton>
        </NavButtons>
        <AddressBar>
          <LockIcon />
          <Scheme>https</Scheme>://<Host>10.170.232.132</Host>
          <UrlInput aria-label="Address" defaultValue="/cloud/org/ite/#/orgUserHome?" />
          <AddressTools><TumblrIcon /><StarIcon /></AddressTools>
        </AddressBar>
        <Extensions><MailBadge /><FeedBadge /><BirdBadge />
          <ToolIcons><DropperIcon size={18} /><AdblockIcon size={19} /><MaskIcon size={18} /><WrenchIcon size={17} /></ToolIcons>
        </Extensions>
      </Toolbar>

      <BookmarkBar>
        {bookmarks.map(([Icon, label, w], i) => (
          <Bookmark key={i} href="#" $w={w} aria-label={label || 'Bookmark'}><Icon />{label}</Bookmark>
        ))}
        <OtherBookmarks href="#" $w={116}><FolderIcon />Other Bookmarks</OtherBookmarks>
      </BookmarkBar>

      <Header>
        <History>
          <HistoryButton aria-label="Previous"><svg width="12" height="16"><path d="M11 0v16L1 8z" fill="#fff" /></svg></HistoryButton>
          <HistoryButton aria-label="Next"><svg width="8" height="12"><path d="M0 0v12l8-6z" fill="#fff" /></svg></HistoryButton>
        </History>
        <Logo>orange</Logo>
        <OrgName>ite</OrgName>
        <UserMenu>
          <span>amercier</span><Role>(Organization Administrator)</Role>
          <Divider /><a href="#">Preferences</a>
          <Divider /><HelpLink href="#">Help<svg width="7" height="4"><path d="M0 0h7L3.500 4z" fill="#fff" /></svg></HelpLink>
          <Divider /><a href="#">Logout</a>
        </UserMenu>
      </Header>

      <AppTabs>
        <AppTab $active><HomeIcon />Home</AppTab>
        <AppTab><CloudIcon />My Cloud</AppTab>
        <AppTab><CatalogIcon />Catalogs</AppTab>
        <AppTab><AdminIcon />Administration</AppTab>
      </AppTabs>

      <Body>
        <Main>
          <Intro>
            <div>
              <PageTitle>Quick Access</PageTitle>
              <Hint>To start a vApp, click Start. To use a powered on a vApp, click on its thumbnail.</Hint>
            </div>
            <Collapse aria-label="Collapse sidebar"><svg width="9" height="8"><path d="M0 0v8l4-4zM5 0v8l4-4z" fill="#555" /></svg></Collapse>
          </Intro>
          <Actions>
            <PlainButton><PlusIcon />Add vApp from Catalog</PlainButton>
            <PlainButton><BuildIcon />Build New vApp</PlainButton>
            <ActionTools>
              <PlainButton aria-label="Refresh"><RefreshIcon /></PlainButton>
              <PlainButton aria-label="Help"><HelpIcon /></PlainButton>
            </ActionTools>
          </Actions>
          <Cards>
            {vapps.map(v => (
              <Card key={v.name}>
                <CardTitle>{v.name}</CardTitle>
                <Screens>
                  {Array.from({ length: v.screens }, (_, i) => <Screen key={i} on={v.on} logo={v.logos?.[i]} />)}
                  {v.screens === 3 && <More aria-label="More"><svg width="5" height="8"><path d="M0 0v8l5-4z" fill="#555" /></svg></More>}
                </Screens>
                <StatusRow><span>{v.status}</span><a href="#">Open</a></StatusRow>
                <Controls>
                  <PlainButton aria-label="Start"><PlayIcon dim={!v.play} /></PlainButton>
                  <PlainButton aria-label="Suspend"><PauseIcon dim={!v.pause} /></PlainButton>
                  <PlainButton aria-label="Stop"><StopIcon dim={!v.stop} /></PlainButton>
                </Controls>
              </Card>
            ))}
          </Cards>
          <Pager>
            <PageButton aria-label="First page"><PageArrow back edge /></PageButton>
            <PageButton aria-label="Previous page"><PageArrow back /></PageButton>
            <PageCount>1-6 of 6</PageCount>
            <PageButton aria-label="Next page"><PageArrow /></PageButton>
            <PageButton aria-label="Last page"><PageArrow edge /></PageButton>
          </Pager>
        </Main>
        <Sidebar>
          {sections.map(([title, links]) => (
            <section key={title}>
              <SideTitle>{title}</SideTitle>
              <SideList>
                {links.map(([Icon, label]) => <li key={label}><SideLink href="#"><Icon />{label}</SideLink></li>)}
              </SideList>
            </section>
          ))}
        </Sidebar>
      </Body>

      <Footer>
        <Jobs><JobsIcon /><a href="#">0 Running</a><CheckIcon size={15} /><a href="#">0 Failed</a></Jobs>
        <Portal><PortalLogo><OrangeIcon /></PortalLogo>E2C Portal</Portal>
        <FooterInfo>
          <span>101.55 mb</span><span>ID47000</span><span>Powered by</span>
          <VmwareMark><b>vm</b>ware</VmwareMark>
          <FooterButtons><FooterButton>Debug</FooterButton><FooterButton>Console</FooterButton></FooterButtons>
        </FooterInfo>
      </Footer>

      <Panel>
        <Launchers>
          {launchers.map((Icon, i) => <PlainButton key={i} aria-label="Launcher"><Icon size={24} /></PlainButton>)}
          <PlainButton aria-label="Calculator"><CalcIcon size={22} /></PlainButton>
        </Launchers>
        <Grip />
        <Tasks>
          {tasks.map((Icon, i) => <Task key={i} $active={i === 0}><Icon size={17} />...</Task>)}
        </Tasks>
        <Tray $gap={3}><TermIcon size={21} /><RootTermIcon size={21} /><TornIcon size={21} /><DriveIcon size={21} /></Tray>
        <MeterTray $gap={2}>
          <Meter $level={30} $color="#177bb5" /><Meter $level={78} $color="#19b268" /><Meter $level={0} $color="#000" /><Meter $level={0} $color="#000" />
        </MeterTray>
        <Grip />
        <StatusTray $gap={14}>
          <ChatIcon size={21} /><KeysIcon size={20} /><DiskIcon size={19} />
          <TrayText $w={26}>USA<sub>2</sub></TrayText>
          <PlugIcon size={20} /><SpeakerIcon size={18} />
          <TrayText $w={36}>17:02</TrayText>
          <SwitchIcon size={20} />
        </StatusTray>
        <Workspaces><ActiveSpace><ChromeIcon size={16} /></ActiveSpace></Workspaces>
        <LastTray $gap={0}><TrashIcon size={21} /></LastTray>
      </Panel>

      <Pointer width="13" height="20" viewBox="0 0 13 20" aria-hidden>
        <path d="M1 1v15l3.500-3 2.500 6 2.500-1-2.500-6h4.500z" fill="#fff" stroke="#000" strokeWidth="1.200" />
      </Pointer>
    </Page>
  );
}
